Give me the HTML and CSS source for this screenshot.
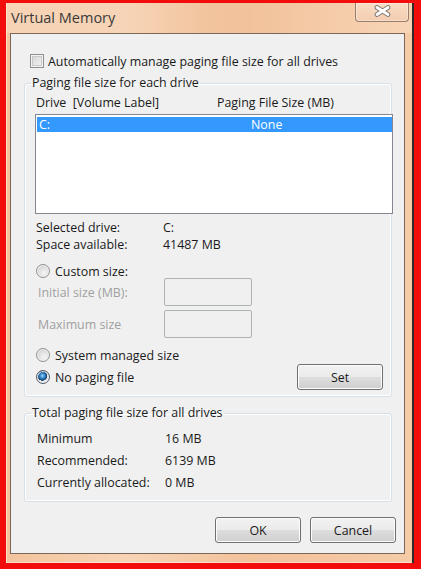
FILE: index.html
```html
<!DOCTYPE html>
<html>
<head>
<meta charset="utf-8">
<title>Virtual Memory</title>
<link rel="stylesheet" href="styles.css">
</head>
<body>
<div class="window">
  <div class="titlebar">
    <span class="title">Virtual Memory</span>
    <div class="close">
      <svg width="17" height="12" viewBox="0 0 17 12">
        <path d="M3 2.5 L14 9.5 M14 2.5 L3 9.5" stroke="#7a7470" stroke-width="4.6" stroke-linecap="round" fill="none"/>
        <path d="M3 2.5 L14 9.5 M14 2.5 L3 9.5" stroke="#ffffff" stroke-width="2.8" stroke-linecap="round" fill="none"/>
      </svg>
    </div>
  </div>
  <div class="panel">
    <div class="check-row"><span class="checkbox"></span><span>Automatically manage paging file size for all drives</span></div>

    <fieldset class="group group-drive">
      <legend>Paging file size for each drive</legend>
      <div class="group-body">
        <div class="list-header"><span class="col-drive">Drive&nbsp;&nbsp;[Volume Label]</span><span class="col-size">Paging File Size (MB)</span></div>
        <div class="listbox">
          <div class="list-row selected"><span class="cell-drive">C:</span><span class="cell-size">None</span></div>
        </div>
        <div class="info">
          <div class="info-row"><span class="info-label">Selected drive:</span><span>C:</span></div>
          <div class="info-row"><span class="info-label">Space available:</span><span>41487 MB</span></div>
        </div>
        <div class="radio-row custom"><span class="radio"></span><span>Custom size:</span></div>
        <div class="field-row first"><span class="field-label">Initial size (MB):</span><span class="textbox"></span></div>
        <div class="field-row"><span class="field-label">Maximum size</span><span class="textbox"></span></div>
        <div class="radio-row system"><span class="radio"></span><span>System managed size</span></div>
        <div class="radio-row nopaging">
          <div class="radio-label"><span class="radio checked"></span><span>No paging file</span></div>
          <button class="btn set">Set</button>
        </div>
      </div>
    </fieldset>

    <fieldset class="group group-total">
      <legend>Total paging file size for all drives</legend>
      <div class="group-body total-body">
        <div class="total-row"><span class="total-label">Minimum</span><span>16 MB</span></div>
        <div class="total-row"><span class="total-label">Recommended:</span><span>6139 MB</span></div>
        <div class="total-row"><span class="total-label">Currently allocated:</span><span>0 MB</span></div>
      </div>
    </fieldset>

    <div class="buttons">
      <button class="btn">OK</button>
      <button class="btn">Cancel</button>
    </div>
  </div>
</div>
</body>
</html>
```

FILE: styles.css
```css
html, body {
  margin: 0;
  padding: 0;
}
body {
  background: #f20c0c;
  width: 421px;
  height: 569px;
  overflow: hidden;
  font-family: "Open Sans", "Noto Sans", sans-serif;
  font-size: 12.4px;
  color: #1a1a1a;
}
.window {
  margin: 3px 7px 6px 6px;
  height: 560px;
  box-sizing: border-box;
  border-right: 2px solid #2e2a28;
  background: linear-gradient(90deg, #f3c49d 0%, #f7d4b6 30%, #f2c29b 60%, #f5cba8 100%);
  display: flex;
  flex-direction: column;
  box-shadow: inset 1px 0 0 rgba(255,255,255,0.45), inset 0 -1px 0 rgba(255,255,255,0.45);
}
.titlebar {
  height: 30px;
  display: flex;
  justify-content: space-between;
  align-items: flex-start;
  background: linear-gradient(90deg, rgba(255,240,225,0.35), rgba(230,170,120,0.15) 50%, rgba(255,235,215,0.3));
}
.title {
  font-family: "Open Sans", "Noto Sans", sans-serif;
  font-size: 14.5px;
  color: #3a3a3a;
  padding-left: 5px;
  line-height: 30px;
}
.close {
  width: 54px;
  height: 19px;
  margin-right: 3px;
  box-sizing: border-box;
  border: 1px solid #9a7f6c;
  border-top: none;
  border-radius: 0 0 4px 4px;
  background: linear-gradient(180deg, #f8dcc5, #f3cdb0);
  box-shadow: inset 0 0 0 1px rgba(255,255,255,0.35);
  display: flex;
  align-items: center;
  justify-content: center;
}
.close svg {
  margin-top: -2px;
}
.panel {
  flex: 1;
  margin: 0 7px 9px 4px;
  background: #f0f0f0;
  border: 1px solid #7b685a;
  display: flex;
  flex-direction: column;
}
.check-row {
  display: flex;
  align-items: center;
  height: 20px;
  margin-top: 17px;
  padding-left: 19px;
  gap: 4px;
}
.checkbox {
  width: 14px;
  height: 14px;
  box-sizing: border-box;
  border: 1px solid #8e8f8f;
  background: linear-gradient(135deg, #d4d4d4, #f6f6f6);
  box-shadow: inset 0 0 0 1px #f4f4f4, inset 0 0 0 2px #c9c9c9;
}
.group {
  margin: 0 12px 0 13px;
  padding: 0;
  border: 1px solid #d5dfe5;
  border-radius: 3px;
  box-shadow: inset 0 0 0 1px #ffffff;
  min-width: 0;
}
.group legend {
  margin-left: 6px;
  padding: 0 1px;
  line-height: 16px;
  height: 16px;
}
.group-drive {
  margin-top: 4px;
}
.group-body {
  padding: 4px 0 6px 10px;
}
.list-header {
  display: flex;
  height: 16px;
  line-height: 16px;
  padding-left: 1px;
}
.col-drive {
  width: 181px;
}
.listbox {
  margin-top: 3px;
  width: 358px;
  height: 100px;
  box-sizing: border-box;
  border: 1px solid #828790;
  background: #ffffff;
  padding: 2px 0 0 1px;
}
.list-row {
  display: flex;
  height: 15px;
  line-height: 15px;
}
.list-row.selected {
  background: #3399ff;
  color: #ffffff;
}
.cell-drive {
  padding-left: 2px;
  width: 212px;
}
.info {
  margin-top: 5px;
}
.info-row {
  display: flex;
  height: 17px;
  line-height: 17px;
  padding-left: 1px;
}
.info-label {
  width: 127px;
}
.radio-row {
  display: flex;
  align-items: center;
  gap: 5px;
  height: 16px;
  padding-left: 1px;
}
.radio-row.custom {
  margin-top: 10px;
}
.radio-row.system {
  margin-top: 9px;
}
.radio-row.nopaging {
  height: 26px;
  margin-top: 1px;
  justify-content: space-between;
  padding-right: 8px;
}
.radio-label {
  display: flex;
  align-items: center;
  gap: 5px;
}
.radio {
  width: 14px;
  height: 14px;
  box-sizing: border-box;
  border-radius: 50%;
  border: 1px solid #8f9190;
  background: radial-gradient(circle at 60% 65%, #f5f5f5 0%, #dcdcdc 55%, #c8c8c8 100%);
  box-shadow: inset 0 0 0 1px #f2f2f2;
  display: inline-block;
}
.radio.checked {
  background:
    radial-gradient(circle at 45% 40%, #9fd8ff 0%, #3d8fd0 22%, #14406b 48%, transparent 52%),
    radial-gradient(circle at 60% 65%, #f5f5f5 0%, #dcdcdc 55%, #c8c8c8 100%);
  border-color: #4e5a66;
}
.field-row {
  display: flex;
  align-items: center;
  height: 28px;
  margin-top: 4px;
}
.field-row.first {
  margin-top: -1px;
}
.field-label {
  width: 126px;
  padding-left: 3px;
  color: #a0a0a0;
}
.textbox {
  width: 88px;
  height: 28px;
  box-sizing: border-box;
  border: 1px solid #adb2b5;
  border-radius: 2px;
  background: #f0f0f0;
}
.btn {
  font-family: "Open Sans", "Noto Sans", sans-serif;
  font-size: 12.4px;
  color: #1a1a1a;
  width: 86px;
  height: 26px;
  padding: 0;
  box-sizing: border-box;
  border: 1px solid #707070;
  border-radius: 3px;
  background: linear-gradient(180deg, #f2f2f2 0%, #ebebeb 48%, #dddddd 52%, #cfcfcf 100%);
  box-shadow: inset 0 0 0 1px #fcfcfc;
}
.group-total {
  margin-top: 8px;
}
.total-body {
  padding: 7px 0 7px 12px;
}
.total-row {
  display: flex;
  height: 22px;
  line-height: 22px;
}
.total-label {
  width: 128px;
}
.buttons {
  display: flex;
  justify-content: flex-end;
  gap: 9px;
  margin-top: 15px;
  padding-right: 8px;
}
```
